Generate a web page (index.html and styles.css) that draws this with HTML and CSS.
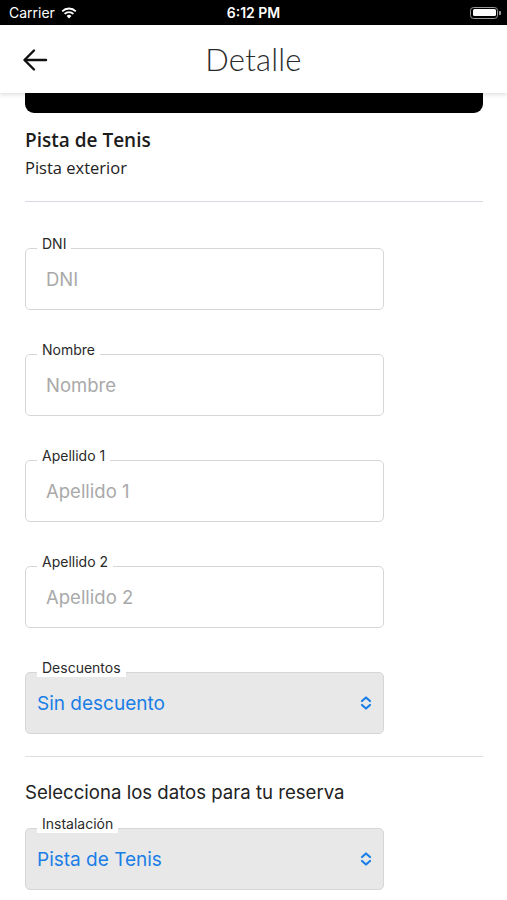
FILE: index.html
```html
<!DOCTYPE html>
<html lang="es">
<head>
    <meta charset="UTF-8">
    <meta name="viewport" content="width=device-width, initial-scale=1.0">
    <title>Detalle</title>
    <link rel="stylesheet" href="styles.css">
</head>
<body>
    <div class="status-bar">
        <div class="status-left">
            <span>Carrier</span>
            <svg class="wifi" width="16" height="12" viewBox="0 0 16 12">
                <path d="M8 11.5 L5.6 8.9 A3.4 3.4 0 0 1 10.4 8.9 Z" fill="#fff"/>
                <path d="M3.6 6.9 A6.2 6.2 0 0 1 12.4 6.9" stroke="#fff" stroke-width="1.8" fill="none"/>
                <path d="M1.2 4.3 A9.6 9.6 0 0 1 14.8 4.3" stroke="#fff" stroke-width="1.8" fill="none"/>
            </svg>
        </div>
        <span class="status-time">6:12 PM</span>
        <div class="battery">
            <span class="battery-fill"></span>
        </div>
    </div>

    <header class="app-header">
        <button class="back-btn" aria-label="Volver">
            <svg width="28" height="28" viewBox="0 0 28 28" fill="none" stroke="#111" stroke-width="2.4" stroke-linecap="round" stroke-linejoin="round">
                <path d="M25 14H4"/>
                <path d="M13 4.5L3.5 14L13 23.5"/>
            </svg>
        </button>
        <h1 class="app-title">Detalle</h1>
    </header>

    <main class="content">
        <div class="hero-bar"></div>

        <section class="facility">
            <h2 class="facility-name">Pista de Tenis</h2>
            <p class="facility-type">Pista exterior</p>
        </section>

        <hr class="divider">

        <form class="booking-form">
            <div class="field">
                <label class="field-label">DNI</label>
                <input class="field-input" type="text" placeholder="DNI">
            </div>
            <div class="field">
                <label class="field-label">Nombre</label>
                <input class="field-input" type="text" placeholder="Nombre">
            </div>
            <div class="field">
                <label class="field-label">Apellido 1</label>
                <input class="field-input" type="text" placeholder="Apellido 1">
            </div>
            <div class="field">
                <label class="field-label">Apellido 2</label>
                <input class="field-input" type="text" placeholder="Apellido 2">
            </div>
            <div class="field">
                <label class="field-label">Descuentos</label>
                <div class="field-select">
                    <span>Sin descuento</span>
                    <svg width="12" height="16" viewBox="0 0 12 16" fill="none" stroke="#1a7ee6" stroke-width="2.2" stroke-linecap="round" stroke-linejoin="round">
                        <path d="M2 6L6 2.5L10 6"/>
                        <path d="M2 10L6 13.5L10 10"/>
                    </svg>
                </div>
            </div>
        </form>

        <hr class="divider divider-light">

        <p class="section-title">Selecciona los datos para tu reserva</p>

        <div class="field">
            <label class="field-label">Instalación</label>
            <div class="field-select">
                <span>Pista de Tenis</span>
                <svg width="12" height="16" viewBox="0 0 12 16" fill="none" stroke="#1a7ee6" stroke-width="2.2" stroke-linecap="round" stroke-linejoin="round">
                    <path d="M2 6L6 2.5L10 6"/>
                    <path d="M2 10L6 13.5L10 10"/>
                </svg>
            </div>
        </div>
    </main>
</body>
</html>
```

FILE: styles.css
```css
:root {
    --color-text-primary: #1c1c1c;
    --color-placeholder: #a9a9a9;
    --color-border: #d6d6d6;
    --color-select-bg: #e8e8e8;
    --color-link: #1a7ee6;
}

* {
    box-sizing: border-box;
    margin: 0;
    padding: 0;
}

body {
    font-family: Lato, "Open Sans", sans-serif;
    background-color: #ffffff;
    color: var(--color-text-primary);
    width: 507px;
    height: 900px;
    overflow: hidden;
}

.status-bar {
    height: 25px;
    background-color: #000;
    color: #fff;
    display: flex;
    align-items: center;
    justify-content: space-between;
    padding: 0 9px 0 9px;
    font-family: Inter, "Liberation Sans", sans-serif;
    font-size: 14px;
    position: relative;
}

.status-left {
    display: flex;
    align-items: center;
    gap: 6px;
}

.status-time {
    position: absolute;
    left: 50%;
    transform: translateX(-50%);
    font-weight: 600;
}

.battery {
    width: 28px;
    height: 12px;
    border: 1.5px solid #999;
    border-radius: 3.5px;
    padding: 1.5px;
    position: relative;
}

.battery::after {
    content: "";
    position: absolute;
    right: -4px;
    top: 3px;
    width: 2px;
    height: 4px;
    background-color: #999;
    border-radius: 0 1px 1px 0;
}

.battery-fill {
    display: block;
    width: 100%;
    height: 100%;
    background-color: #fff;
    border-radius: 1.5px;
}

.app-header {
    height: 68px;
    background-color: #fff;
    display: flex;
    align-items: center;
    justify-content: center;
    position: relative;
    box-shadow: 0 2px 4px rgba(0, 0, 0, 0.12);
    z-index: 2;
}

.back-btn {
    position: absolute;
    left: 21px;
    top: 21px;
    background: none;
    border: none;
    display: flex;
}

.app-title {
    font-size: 31px;
    font-weight: 300;
    color: #2a2a2a;
    letter-spacing: 0.2px;
}

.content {
    padding: 0 24px 0 25px;
}

.hero-bar {
    height: 20px;
    background-color: #000;
    border-radius: 0 0 9px 9px;
}

.facility {
    padding-top: 15px;
}

.facility-name {
    font-family: "Open Sans", Lato, sans-serif;
    font-size: 19px;
    font-weight: 600;
    line-height: 24px;
}

.facility-type {
    font-family: "Open Sans", Lato, sans-serif;
    font-size: 16.5px;
    margin-top: 6px;
    line-height: 20px;
    color: #222;
}

.divider {
    border: none;
    border-top: 1.5px solid #d9d9e3;
    margin-top: 23px;
    margin-bottom: 46px;
}

.divider-light {
    border-top-color: #dedede;
    margin-top: 22px;
    margin-bottom: 22px;
}

.booking-form {
    display: flex;
    flex-direction: column;
    gap: 44px;
}

.field {
    width: 359px;
    position: relative;
}

.field-label {
    position: absolute;
    left: 12px;
    top: -13px;
    padding: 0 5px 0 5px;
    background-color: #fff;
    font-family: Inter, "Liberation Sans", sans-serif;
    font-size: 14px;
    line-height: 18px;
    color: #2a2a2a;
}

.field-input {
    display: block;
    width: 100%;
    height: 62px;
    border: 1.5px solid var(--color-border);
    border-radius: 5px;
    padding: 0 20px;
    font-family: Inter, "Liberation Sans", sans-serif;
    font-size: 18.5px;
    color: var(--color-text-primary);
    background-color: #fff;
    outline: none;
}

.field-input::placeholder {
    color: var(--color-placeholder);
}

.field-select {
    height: 62px;
    border: 1.5px solid var(--color-border);
    border-radius: 5px;
    background-color: var(--color-select-bg);
    display: flex;
    align-items: center;
    justify-content: space-between;
    padding: 0 11px 0 11px;
    font-family: Inter, "Liberation Sans", sans-serif;
    font-size: 19px;
    color: var(--color-link);
}

.section-title {
    font-family: Inter, "Liberation Sans", sans-serif;
    font-size: 18.6px;
    line-height: 26px;
    color: #222;
    margin-bottom: 23px;
}
```
